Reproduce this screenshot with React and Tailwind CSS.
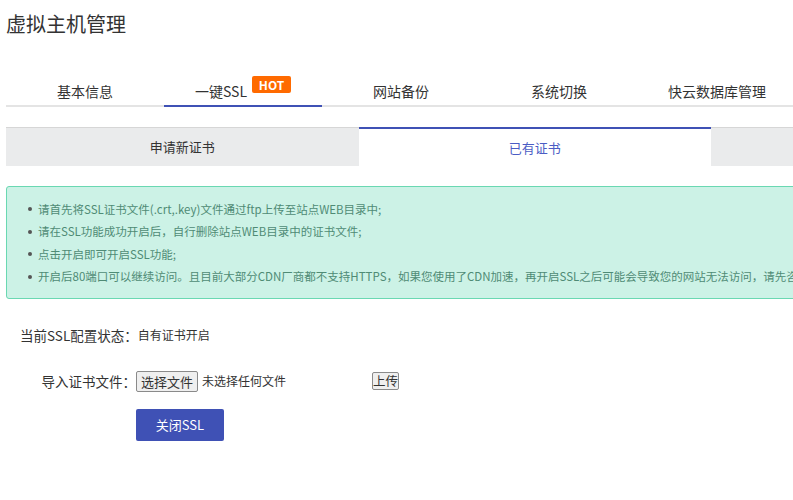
import React, { useState } from "react";

const tabs = ["基本信息", "一键SSL", "网站备份", "系统切换", "快云数据库管理"];
const subTabs = ["申请新证书", "已有证书", ""];
const tips = [
  "请首先将SSL证书文件(.crt,.key)文件通过ftp上传至站点WEB目录中;",
  "请在SSL功能成功开启后，自行删除站点WEB目录中的证书文件;",
  "点击开启即可开启SSL功能;",
  "开启后80端口可以继续访问。且目前大部分CDN厂商都不支持HTTPS，如果您使用了CDN加速，再开启SSL之后可能会导致您的网站无法访问，请先咨询您的CDN服务商。",
];

export default function App() {
  const [tab, setTab] = useState(1);
  const [subTab, setSubTab] = useState(1);

  return (
    <div
      className="w-[793px] h-[500px] overflow-hidden bg-white text-[#333]"
      style={{ fontFamily: '"Noto Sans CJK SC", "Noto Sans", sans-serif' }}
    >
      <div className="w-[1070px] pl-[6px]">
        <h1 className="pt-[10px] text-[20px] leading-[28px] font-normal">虚拟主机管理</h1>

        {/* main tabs */}
        <div className="mt-[38px] flex border-b-2 border-[#e4e4e4]">
          {tabs.map((t, i) => (
            <div
              key={t}
              onClick={() => setTab(i)}
              className={
                "w-[158px] h-[31px] -mb-[2px] flex justify-center cursor-pointer border-b-2 " +
                (tab === i ? "border-[#3f51b5]" : "border-transparent")
              }
            >
              <span className="text-[14px] leading-[18px] mt-[6px] whitespace-nowrap">{t}</span>
              {i === 1 && (
                <span className="ml-[5px] mt-[0px] h-[17px] w-[39px] rounded-[2px] bg-[#ff6a00] text-white text-[12px] font-bold leading-[17px] text-center">
                  HOT
                </span>
              )}
            </div>
          ))}
        </div>

        {/* sub tabs */}
        <div className="mt-[20px] flex">
          {subTabs.map((t, i) => (
            <div
              key={i}
              onClick={() => setSubTab(i)}
              className={
                "w-[352.5px] h-[39px] flex items-center justify-center text-[13px] cursor-pointer " +
                (subTab === i
                  ? "bg-white border-t-2 border-[#3f51b5] text-[#4b5cc4]"
                  : "bg-[#eaebec] border-t border-[#d6d6d6]")
              }
            >
              {t}
            </div>
          ))}
        </div>

        {/* tips */}
        <div className="mt-[20px] h-[113px] rounded-[3px] border border-[#6ad8b2] bg-[#ccf2e6] pt-[11px] pl-[21px]">
          {tips.map((t) => (
            <div key={t} className="flex items-center h-[22.5px] whitespace-nowrap">
              <span className="w-[4px] h-[4px] rounded-full bg-[#555] mr-[6px]"></span>
              <span className="text-[11.5px] text-[#4f8b75]">{t}</span>
            </div>
          ))}
        </div>

        {/* status */}
        <div className="mt-[27px] pl-[14px] flex items-center h-[18px] whitespace-nowrap">
          <span className="text-[13.5px]">当前SSL配置状态：</span>
          <span className="text-[12px]">自有证书开启</span>
        </div>

        <div className="mt-[26px] flex items-center h-[22px] whitespace-nowrap">
          <span className="w-[130px] text-right text-[13.5px]">导入证书文件：</span>
          <button className="w-[62px] h-[21px] border border-[#8a8a8a] rounded-[2px] bg-[#efefef] text-[13px] leading-[19px] px-0">
            选择文件
          </button>
          <span className="ml-[4px] w-[170px] text-[12px]">未选择任何文件</span>
          <button className="w-[27px] h-[18px] border border-[#8a8a8a] rounded-[2px] bg-[#efefef] text-[12.5px] leading-[16px] px-0 whitespace-nowrap">
            上传
          </button>
        </div>

        <div className="mt-[17px] pl-[130px]">
          <button className="w-[88px] h-[32px] rounded-[2px] bg-[#3f51b5] text-white text-[13px]">
            关闭SSL
          </button>
        </div>
      </div>
    </div>
  );
}
